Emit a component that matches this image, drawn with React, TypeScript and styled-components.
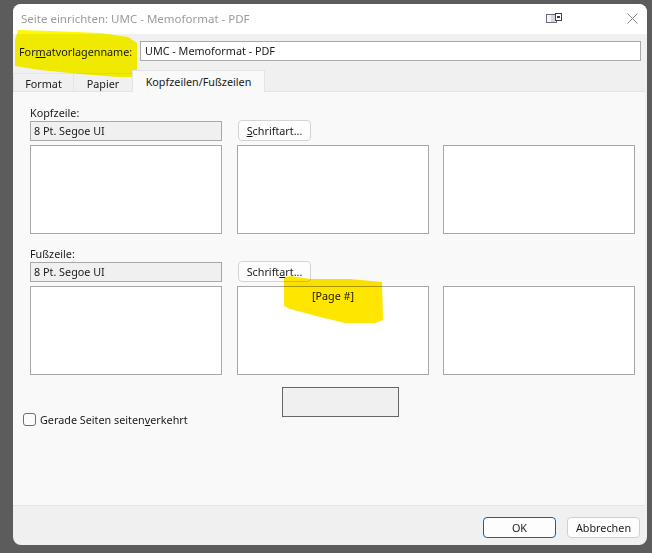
import styled, { createGlobalStyle } from 'styled-components'

const GlobalStyle = createGlobalStyle`
  html, body {
    margin: 0;
    padding: 0;
    background: #5c5c5c;
  }
  body {
    font-family: 'Noto Sans', 'Open Sans', sans-serif;
    font-size: 10.8px;
    color: #1a1a1a;
  }
`

const Desktop = styled.div`
  position: relative;
  width: 652px;
  height: 553px;
  padding: 4px 5px 8px 13px;
  box-sizing: border-box;
  overflow: hidden;
`

const Dialog = styled.div`
  height: 541px;
  display: flex;
  flex-direction: column;
  border-radius: 8px;
  overflow: hidden;
  background: #f0f0f0;
`

const TitleBar = styled.div`
  height: 30px;
  flex: none;
  display: flex;
  align-items: center;
  box-sizing: border-box;
  background: #ffffff;
  padding: 0 9px 2px 8px;
`

const Title = styled.span`
  flex: 1;
  font-size: 11.5px;
  color: #9b9b9b;
  white-space: nowrap;
`

const TitleIcons = styled.div`
  display: flex;
  align-items: center;
  gap: 65px;
`

const NameRow = styled.div`
  height: 34px;
  flex: none;
  display: flex;
  align-items: center;
  padding: 0 6px;
  box-sizing: border-box;
  gap: 9px;
`

const NameLabel = styled.label`
  width: 112px;
  white-space: nowrap;
`

const TextInput = styled.div`
  flex: 1;
  height: 20px;
  line-height: 18px;
  padding: 0 4px;
  border: 1px solid #a8a8a8;
  background: #fff;
  box-sizing: border-box;
`

const TabStrip = styled.div`
  height: 23px;
  flex: none;
  display: flex;
  align-items: flex-end;
  padding-left: 1px;
`

const Tab = styled.div<{ $active?: boolean; $width: number }>`
  width: ${(p) => p.$width}px;
  height: ${(p) => (p.$active ? 22 : 18)}px;
  line-height: ${(p) => (p.$active ? 21 : 19)}px;
  margin-bottom: ${(p) => (p.$active ? -1 : 0)}px;
  text-align: center;
  box-sizing: border-box;
  white-space: nowrap;
  border: 1px solid #e4e4e4;
  border-bottom: none;
  margin-left: -1px;
  background: ${(p) => (p.$active ? '#f9f9f9' : '#f0f0f0')};
  position: relative;
  z-index: ${(p) => (p.$active ? 1 : 0)};
`

const Panel = styled.div`
  height: 415px;
  flex: none;
  margin-right: 2px;
  padding: 12px 10px 0 17px;
  box-sizing: border-box;
  background: #f9f9f9;
  border-top: 1px solid #e4e4e4;
  border-bottom: 1px solid #e4e4e4;
`

const Section = styled.section`
  display: flex;
  flex-direction: column;
  margin-bottom: 11px;
`

const SectionLabel = styled.div`
  height: 16px;
  line-height: 18px;
`

const FontRow = styled.div`
  display: flex;
  align-items: flex-end;
  gap: 16px;
  height: 21px;
`

const FontField = styled.div`
  width: 192px;
  height: 20px;
  line-height: 18px;
  padding: 0 3px;
  box-sizing: border-box;
  border: 1px solid #a8a8a8;
  background: #f0f0f0;
`

const FontButton = styled.button`
  width: 73px;
  height: 21px;
  padding: 0;
  font: inherit;
  color: inherit;
  background: #fdfdfd;
  border: 1px solid #d4d4d4;
  border-radius: 4px;
  white-space: nowrap;
`

const BoxRow = styled.div`
  display: grid;
  grid-template-columns: 207px 206px 192px;
  margin-top: 4px;
`

const EditBox = styled.div`
  width: 192px;
  height: 89px;
  box-sizing: border-box;
  border: 1px solid #a8a8a8;
  background: #fff;
  text-align: center;
  line-height: 18px;
`

const PreviewRow = styled.div`
  display: flex;
  justify-content: center;
  margin: 12px 0 0 16px;
  height: 30px;
`

const PreviewBox = styled.div`
  width: 117px;
  height: 30px;
  box-sizing: border-box;
  border: 1px solid #666;
  background: #f0f0f0;
`

const CheckRow = styled.label`
  display: flex;
  align-items: center;
  gap: 4px;
  margin: -5px 0 0 -7px;
`

const CheckBox = styled.span`
  width: 13px;
  height: 13px;
  box-sizing: border-box;
  border: 1px solid #6f6f6f;
  border-radius: 3px;
  background: #fbfbfb;
`

const Footer = styled.div`
  flex: 1;
  display: flex;
  justify-content: flex-end;
  align-items: center;
  gap: 11px;
  padding: 3px 7px 0 0;
`

const DialogButton = styled.button<{ $primary?: boolean }>`
  height: 21px;
  width: 73px;
  padding: 0;
  font: inherit;
  color: inherit;
  background: #fdfdfd;
  border: 1px solid ${(p) => (p.$primary ? '#0067c0' : '#d0d0d0')};
  border-radius: 4px;
`

const Highlight = styled.svg`
  position: absolute;
  left: 0;
  top: 0;
  mix-blend-mode: multiply;
  pointer-events: none;
`

const App = () => {
  return (
    <Desktop>
      <GlobalStyle />
      <Dialog>
        <TitleBar>
          <Title>Seite einrichten: UMC - Memoformat - PDF</Title>
          <TitleIcons>
            <svg width='16' height='10' viewBox='0 0 16 10'>
              <rect x='0.5' y='1.5' width='10' height='8' fill='#f4f4f6' stroke='#6b6b80' />
              <path d='M6 2v7M8 2v7' stroke='#b5b5c0' />
              <rect x='9.5' y='0.5' width='6' height='7' fill='#fff' stroke='#3c3c55' />
              <rect x='11' y='3' width='3' height='2' fill='#3c3c55' />
            </svg>
            <svg width='11' height='11' viewBox='0 0 11 11'>
              <path d='M0.5 0.5l10 10M10.5 0.5l-10 10' stroke='#8a8a8a' fill='none' />
            </svg>
          </TitleIcons>
        </TitleBar>

        <NameRow>
          <NameLabel>
            For<u>m</u>atvorlagenname:
          </NameLabel>
          <TextInput>UMC - Memoformat - PDF</TextInput>
        </NameRow>

        <TabStrip>
          <Tab $width={61}>Format</Tab>
          <Tab $width={60}>Papier</Tab>
          <Tab $width={133} $active>
            Kopfzeilen/Fußzeilen
          </Tab>
        </TabStrip>

        <Panel>
          <Section>
            <SectionLabel>Kopfzeile:</SectionLabel>
            <FontRow>
              <FontField>8 Pt. Segoe UI</FontField>
              <FontButton>
                <u>S</u>chriftart...
              </FontButton>
            </FontRow>
            <BoxRow>
              <EditBox />
              <EditBox />
              <EditBox />
            </BoxRow>
          </Section>

          <Section>
            <SectionLabel>Fußzeile:</SectionLabel>
            <FontRow>
              <FontField>8 Pt. Segoe UI</FontField>
              <FontButton>
                Schrift<u>a</u>rt...
              </FontButton>
            </FontRow>
            <BoxRow>
              <EditBox />
              <EditBox>[Page #]</EditBox>
              <EditBox />
            </BoxRow>
          </Section>

          <PreviewRow>
            <PreviewBox />
          </PreviewRow>

          <CheckRow>
            <CheckBox />
            <span>
              Gerade Seiten seiten<u>v</u>erkehrt
            </span>
          </CheckRow>
        </Panel>

        <Footer>
          <DialogButton $primary>OK</DialogButton>
          <DialogButton>Abbrechen</DialogButton>
        </Footer>
      </Dialog>

      <Highlight width='652' height='553' viewBox='0 0 652 553'>
        <path
          d='M18 30 L50 31 L100 33 L128 37 L137 43 L137 77 L118 77 L80 74 L40 70 L15 66 L15 40 Z'
          fill='#fff800'
        />
        <path
          d='M284 278 L290 276 L310 279 L350 279 L382 282 L383 320 L375 323 L345 323 L320 317 L290 309 L284 306 Z'
          fill='#ffe600'
        />
      </Highlight>
    </Desktop>
  )
}

export default App
